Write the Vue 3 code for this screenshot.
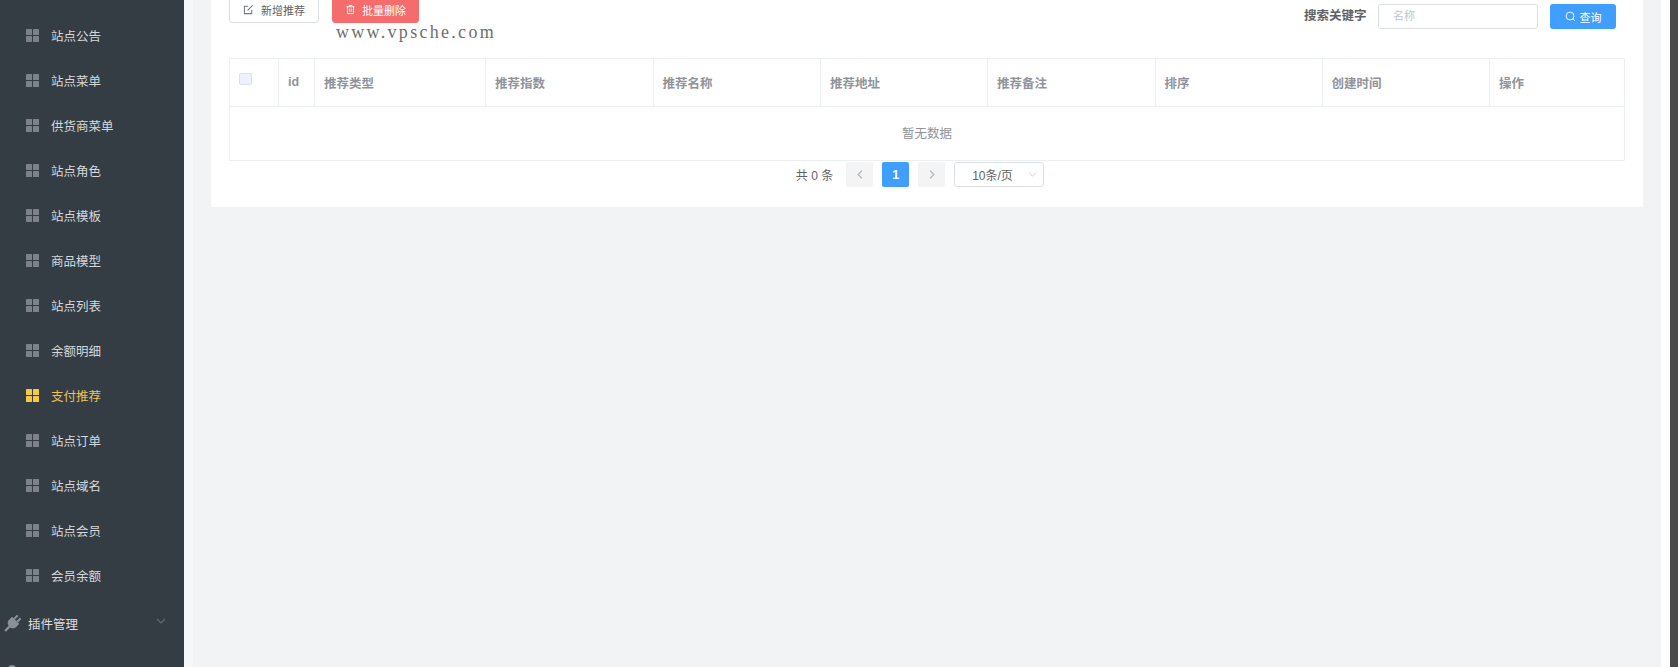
<template>
  <div class="page">
    <aside class="sidebar">
      <ul class="menu">
        <li v-for="item in menuItems" :key="item" class="menu-item" :class="{ active: item === activeItem }">
          <span class="grid-icon"><i></i><i></i><i></i><i></i></span>
          <span>{{ item }}</span>
        </li>
      </ul>
      <div class="menu-group">
        <svg class="plug" viewBox="0 0 17 17" width="17" height="17">
          <g transform="rotate(45 8.5 8.5)" fill="#8b9197">
            <rect x="5.4" y="-1" width="2" height="5" />
            <rect x="9.6" y="-1" width="2" height="5" />
            <path d="M3.5 4H13.5V8A5 5 0 0 1 9.6 12.9V19H7.4V12.9A5 5 0 0 1 3.5 8Z" />
          </g>
        </svg>
        <span class="group-title">插件管理</span>
        <svg class="chevron" viewBox="0 0 10 6" width="10" height="6">
          <path d="M1 1l4 4 4-4" fill="none" stroke="#5f6770" stroke-width="1.2" />
        </svg>
      </div>
      <div class="menu-next"><span class="next-icon"></span></div>
    </aside>

    <div class="gutter"></div>

    <main class="content">
      <section class="card">
        <div class="toolbar">
          <div class="actions">
            <button class="btn btn-plain">
              <svg viewBox="0 0 12 12" width="11" height="11">
                <path d="M9.5 6.5V10.5H1.5V2.5H5.5M5 7l5.5-5.5" fill="none" stroke="#73777d" stroke-width="1.1" />
              </svg>
              新增推荐
            </button>
            <button class="btn btn-danger">
              <svg viewBox="0 0 12 12" width="11" height="11">
                <path d="M1.5 3h9M4.5 3V1.5h3V3M2.8 3v7.5h6.4V3M5 5v3.5M7 5v3.5" fill="none" stroke="#fff" stroke-width="1" />
              </svg>
              批量删除
            </button>
            <span class="watermark">www.vpsche.com</span>
          </div>
          <div class="search">
            <label class="search-label">搜索关键字</label>
            <div class="search-input">名称</div>
            <button class="btn-search">
              <svg viewBox="0 0 12 12" width="11" height="11">
                <circle cx="5.5" cy="5.5" r="4.3" fill="none" stroke="#fff" stroke-width="1" />
                <path d="M8.6 8.6l2 2" stroke="#fff" stroke-width="1" />
              </svg>
              查询
            </button>
          </div>
        </div>

        <div class="table">
          <div class="table-head">
            <div v-for="col in columns" :key="col.key" class="th" :style="{ width: col.width + 'px' }">
              <span v-if="col.key === 'check'" class="checkbox"></span>
              <span v-else>{{ col.label }}</span>
            </div>
          </div>
          <div class="table-empty">暂无数据</div>
        </div>

        <div class="pager">
          <span class="pager-total">共 0 条</span>
          <button class="pager-btn">
            <svg viewBox="0 0 8 12" width="6" height="9"><path d="M6.5 1 1.5 6l5 5" fill="none" stroke="#b3b6bc" stroke-width="1.6" /></svg>
          </button>
          <button class="pager-btn current">1</button>
          <button class="pager-btn">
            <svg viewBox="0 0 8 12" width="6" height="9"><path d="M1.5 1l5 5-5 5" fill="none" stroke="#b3b6bc" stroke-width="1.6" /></svg>
          </button>
          <div class="pager-size">
            <span>10条/页</span>
            <svg viewBox="0 0 10 6" width="9" height="5"><path d="M1 1l4 4 4-4" fill="none" stroke="#c0c4cc" stroke-width="1" /></svg>
          </div>
        </div>
      </section>
    </main>

    <div class="right-strip"></div>
    <div class="scroll-edge"></div>
  </div>
</template>

<script setup>
const activeItem = '支付推荐'

const menuItems = [
  '站点公告', '站点菜单', '供货商菜单', '站点角色', '站点模板', '商品模型', '站点列表',
  '余额明细', '支付推荐', '站点订单', '站点域名', '站点会员', '会员余额'
]

const columns = [
  { key: 'check', label: '', width: 49 },
  { key: 'id', label: 'id', width: 36 },
  { key: 'type', label: '推荐类型', width: 171 },
  { key: 'score', label: '推荐指数', width: 167.5 },
  { key: 'name', label: '推荐名称', width: 167.5 },
  { key: 'url', label: '推荐地址', width: 167 },
  { key: 'remark', label: '推荐备注', width: 167.5 },
  { key: 'sort', label: '排序', width: 167 },
  { key: 'time', label: '创建时间', width: 167.5 },
  { key: 'ops', label: '操作', width: 133.5 }
]
</script>

<style>
html, body {
  margin: 0;
  height: 100%;
  overflow: hidden;
}
</style>

<style scoped>
.page {
  display: flex;
  width: 1678px;
  height: 667px;
  overflow: hidden;
  background: #f2f3f5;
  font-family: "Liberation Sans", "Noto Sans CJK SC", sans-serif;
  font-size: 13px;
}
.sidebar {
  width: 184px;
  flex: none;
  background: #353d44;
  padding-top: 13px;
  box-sizing: border-box;
  overflow: hidden;
}
.menu {
  list-style: none;
  margin: 0;
  padding: 0;
}
.menu-item {
  display: flex;
  align-items: center;
  height: 45px;
  padding-left: 26px;
  gap: 12px;
  color: #d6d8da;
  font-size: 12.5px;
}
.menu-item.active {
  color: #f1c350;
}
.grid-icon {
  display: grid;
  grid-template-columns: 5.75px 5.75px;
  grid-template-rows: 5.75px 5.75px;
  gap: 1.5px;
}
.grid-icon i {
  background: #7d8288;
  border-radius: 0.5px;
}
.active .grid-icon i {
  background: #f6c945;
}
.menu-group {
  display: flex;
  align-items: center;
  height: 50px;
  padding-left: 4px;
  color: #dcdee0;
}
.plug {
  flex: none;
}
.group-title {
  margin-left: 7px;
  font-size: 12.5px;
}
.chevron {
  margin-left: 78px;
  margin-top: -5px;
}
.menu-next {
  padding: 17px 0 0 8px;
}
.next-icon {
  display: block;
  width: 8px;
  height: 8px;
  border-radius: 4px;
  background: #8b9197;
}
.gutter {
  width: 9px;
  flex: none;
  background: #f6f7f9;
}
.content {
  flex: 1;
  min-width: 0;
  padding-left: 18px;
  padding-right: 18px;
}
.card {
  background: #fff;
  margin-top: -3px;
  height: 210px;
  padding: 0 18px;
  box-sizing: border-box;
}
.toolbar {
  display: flex;
  justify-content: space-between;
  height: 60.5px;
}
.actions {
  position: relative;
  display: flex;
  align-items: flex-start;
  gap: 13px;
}
.btn {
  display: inline-flex;
  align-items: center;
  justify-content: center;
  gap: 7px;
  height: 25.5px;
  padding: 0;
  border-radius: 3px;
  font-family: inherit;
  font-size: 11px;
}
.btn-plain {
  width: 90px;
  background: #fff;
  border: 1px solid #dcdfe6;
  color: #606266;
}
.btn-danger {
  width: 87px;
  background: #f56c6c;
  border: 1px solid #f56c6c;
  color: #fff;
  gap: 6px;
}
.watermark {
  position: absolute;
  left: 107px;
  top: 23px;
  font-family: "Liberation Serif", serif;
  font-size: 18px;
  letter-spacing: 2.3px;
  line-height: 24px;
  color: #6e6e6e;
  white-space: nowrap;
}
.search {
  display: flex;
  align-items: flex-start;
  padding-top: 7px;
  padding-right: 9px;
}
.search-label {
  width: 74px;
  line-height: 25px;
  font-size: 12.5px;
  font-weight: 700;
  color: #606266;
}
.search-input {
  width: 160px;
  height: 25px;
  box-sizing: border-box;
  border: 1px solid #dcdfe6;
  border-radius: 3px;
  padding-left: 14px;
  line-height: 23px;
  font-size: 11px;
  color: #c0c4cc;
}
.btn-search {
  display: inline-flex;
  align-items: center;
  justify-content: center;
  gap: 4px;
  width: 66px;
  height: 25px;
  margin-left: 12px;
  padding: 0;
  border: none;
  border-radius: 3px;
  background: #409eff;
  color: #fff;
  font-family: inherit;
  font-size: 11px;
}
.table {
  border: 1px solid #ebeef5;
  border-radius: 1px;
}
.table-head {
  display: flex;
  height: 47px;
  border-bottom: 1px solid #ebeef5;
}
.th {
  flex: none;
  box-sizing: border-box;
  display: flex;
  align-items: center;
  padding-left: 9px;
  border-right: 1px solid #ebeef5;
  font-size: 12.5px;
  font-weight: 700;
  color: #909399;
}
.th:last-child {
  border-right: none;
}
.checkbox {
  display: block;
  width: 12.5px;
  height: 12.5px;
  box-sizing: border-box;
  margin-top: -6px;
  background: #edf2fc;
  border: 1px solid #dcdfe6;
  border-radius: 2px;
}
.table-empty {
  height: 53px;
  line-height: 54px;
  text-align: center;
  font-size: 12.5px;
  color: #909399;
}
.pager {
  display: flex;
  align-items: center;
  justify-content: center;
  margin-top: 1.5px;
  padding-right: 14px;
  height: 25px;
  gap: 9px;
}
.pager-total {
  margin-right: 4px;
  font-size: 12px;
  color: #606266;
}
.pager-btn {
  display: flex;
  align-items: center;
  justify-content: center;
  width: 27px;
  height: 25px;
  padding: 0;
  border: none;
  border-radius: 2px;
  background: #f4f4f5;
  font-family: inherit;
  font-size: 12.5px;
  font-weight: 700;
}
.pager-btn.current {
  background: #409eff;
  color: #fff;
}
.pager-size {
  display: flex;
  align-items: center;
  justify-content: space-between;
  box-sizing: border-box;
  width: 90px;
  height: 25px;
  padding: 0 6px 0 17px;
  border: 1px solid #dcdfe6;
  border-radius: 3px;
  font-size: 12px;
  color: #606266;
}
.right-strip {
  width: 9px;
  flex: none;
  background: #fff;
}
.scroll-edge {
  width: 8px;
  flex: none;
  background: #4b4b4b;
}
</style>
